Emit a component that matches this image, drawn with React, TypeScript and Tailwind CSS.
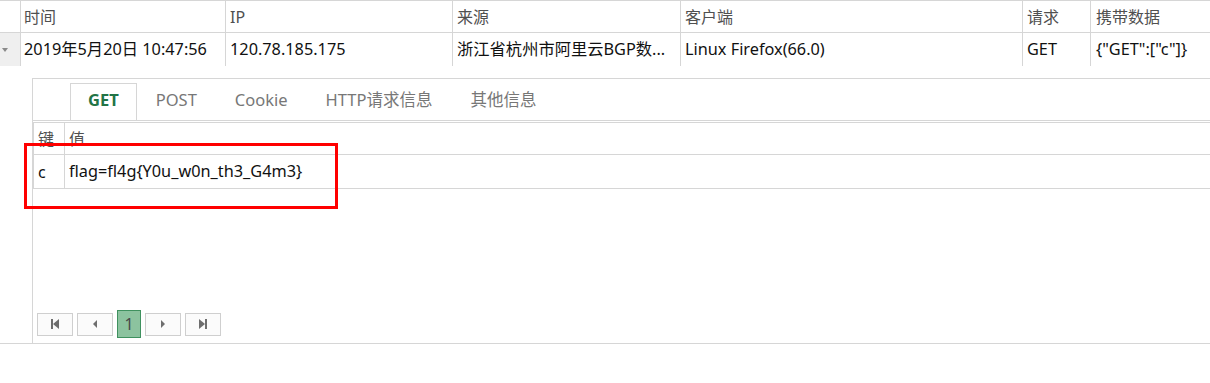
import React from "react";

const FONT = "font-['Noto_Sans','Noto_Sans_CJK_SC',sans-serif]";

function Cell({ w, children, cls = "" }: { w: string; children?: React.ReactNode; cls?: string }) {
  return (
    <div className={`${w} shrink-0 h-full border-r border-[#d6d6d6] flex items-center pl-[3px] whitespace-nowrap overflow-hidden ${cls}`}>
      {children}
    </div>
  );
}

function PagerBtn({ children }: { children: React.ReactNode }) {
  return (
    <div className="w-[36px] h-[23px] border border-[#cfcfcf] bg-[#fbfbfb] flex items-center justify-center">
      {children}
    </div>
  );
}

export default function App() {
  return (
    <div className={`${FONT} w-[1210px] h-[383px] bg-white text-[16px] relative overflow-hidden`}>
      <div className="border-t border-[#d6d6d6]">
        {/* header row */}
        <div className="flex h-[32px] border-b border-[#d6d6d6] text-[#505050]">
          <Cell w="w-[21px]" />
          <Cell w="w-[205px]">时间</Cell>
          <Cell w="w-[227px]" cls="pl-[4px]">IP</Cell>
          <Cell w="w-[228px]" cls="pl-[4px]">来源</Cell>
          <Cell w="w-[342px]" cls="pl-[4px]">客户端</Cell>
          <Cell w="w-[68px]" cls="pl-[4px]">请求</Cell>
          <div className="flex-1 flex items-center pl-[5px]">携带数据</div>
        </div>
        {/* data row */}
        <div className="flex h-[33px] text-[#111] text-[16.3px]">
          <div className="w-[21px] shrink-0 h-full border-r border-[#d6d6d6] bg-[#efefef] flex items-center">
            <svg width="8" height="6" viewBox="0 0 8 6" className="ml-[1px]">
              <path d="M1 1 L7 1 L4 5 Z" fill="#8a8a8a" />
            </svg>
          </div>
          <Cell w="w-[205px]">2019年5月20日 10:47:56</Cell>
          <Cell w="w-[227px]" cls="pl-[4px]">120.78.185.175</Cell>
          <Cell w="w-[228px]" cls="pl-[4px]">浙江省杭州市阿里云BGP数...</Cell>
          <Cell w="w-[342px]" cls="pl-[4px]">Linux Firefox(66.0)</Cell>
          <Cell w="w-[68px]" cls="pl-[4px]">GET</Cell>
          <div className="flex-1 flex items-center pl-[5px] whitespace-nowrap">{'{"GET":["c"]}'}</div>
        </div>
        {/* detail row */}
        <div className="h-[278px] border-b border-[#d6d6d6] pt-[12px] pl-[32px] flex flex-col">
          <div className="flex-1 border-t border-l border-[#d6d6d6] flex flex-col">
            {/* tabs */}
            <div className="h-[42px] border-b border-[#d6d6d6] flex items-end pl-[37px] text-[16.5px]">
              <div className="h-[37px] border border-b-0 border-[#d6d6d6] bg-white px-[17px] pb-[3px] flex items-center font-bold text-[#227446]">GET</div>
              <div className="h-[37px] px-[19px] pb-[3px] flex items-center text-[#777]">POST</div>
              <div className="h-[37px] px-[19px] pb-[3px] flex items-center text-[#777]">Cookie</div>
              <div className="h-[37px] px-[19px] pb-[3px] flex items-center text-[#777]">HTTP请求信息</div>
              <div className="h-[37px] px-[19px] pb-[3px] flex items-center text-[#777]">其他信息</div>
            </div>
            <div className="h-[1px]" />
            {/* inner table */}
            <div className="border-t border-l border-[#d6d6d6]">
              <div className="flex h-[32px] border-b border-[#d6d6d6] text-[#505050]">
                <div className="w-[31px] shrink-0 border-r border-[#d6d6d6] flex items-center pl-[4px]">键</div>
                <div className="flex-1 flex items-center pl-[4px]">值</div>
              </div>
              <div className="flex h-[34px] border-b border-[#d6d6d6] text-[#111]">
                <div className="w-[31px] shrink-0 border-r border-[#d6d6d6] flex items-center pl-[4px]">c</div>
                <div className="flex-1 flex items-center pl-[4px] text-[16.3px]">flag=fl4g{"{"}Y0u_w0n_th3_G4m3{"}"}</div>
              </div>
            </div>
            <div className="flex-1" />
            {/* pager */}
            <div className="flex items-center gap-[4px] pl-[4px] pb-[5px]">
              <PagerBtn>
                <svg width="10" height="12" viewBox="0 0 10 12">
                  <rect x="1" y="1" width="2" height="10" fill="#6e6e6e" />
                  <path d="M9 1 L3 6 L9 11 Z" fill="#6e6e6e" />
                </svg>
              </PagerBtn>
              <PagerBtn>
                <svg width="6" height="10" viewBox="0 0 6 10">
                  <path d="M5 1 L1 5 L5 9 Z" fill="#6e6e6e" />
                </svg>
              </PagerBtn>
              <div className="w-[24px] h-[28px] border border-[#3f915f] bg-[#8cc39f] flex items-center justify-center text-[#4a4a4a]">1</div>
              <PagerBtn>
                <svg width="6" height="10" viewBox="0 0 6 10">
                  <path d="M1 1 L5 5 L1 9 Z" fill="#6e6e6e" />
                </svg>
              </PagerBtn>
              <PagerBtn>
                <svg width="10" height="12" viewBox="0 0 10 12">
                  <path d="M1 1 L7 6 L1 11 Z" fill="#6e6e6e" />
                  <rect x="7" y="1" width="2" height="10" fill="#6e6e6e" />
                </svg>
              </PagerBtn>
            </div>
          </div>
        </div>
      </div>
      {/* red highlight box */}
      <div className="absolute left-[24px] top-[143px] w-[314px] h-[66px] border-[3px] border-[#ff0000]" />
    </div>
  );
}
